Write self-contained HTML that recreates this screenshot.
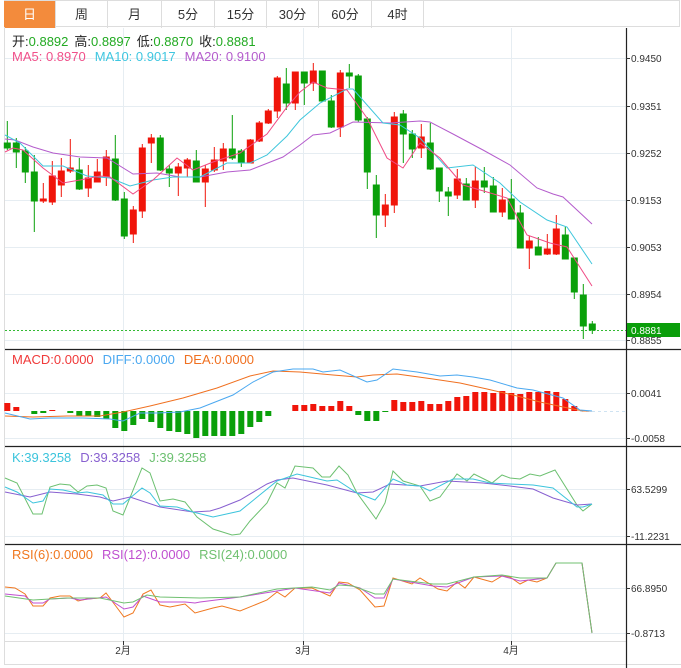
<!DOCTYPE html>
<html><head><meta charset="utf-8"><style>
html,body{margin:0;padding:0;background:#fff;width:681px;height:668px;overflow:hidden;font-family:"Liberation Sans","Noto Sans CJK SC",sans-serif}
.tabs{position:absolute;left:4px;top:0;width:676px;height:27px;border:1px solid #ddd;border-left:none;box-sizing:border-box}
.tab{position:absolute;top:0;height:27px;line-height:27px;text-align:center;font-size:13px;color:#333;border-right:1px solid #ddd;box-sizing:border-box}
.tab.on{background:#f38b3c;color:#fff}
svg{position:absolute;left:0;top:0}
</style></head><body>
<div class="tabs">
<div class="tab on" style="left:0;width:52px">日</div>
<div class="tab" style="left:52px;width:52px">周</div>
<div class="tab" style="left:104px;width:54px">月</div>
<div class="tab" style="left:158px;width:53px">5分</div>
<div class="tab" style="left:211px;width:52px">15分</div>
<div class="tab" style="left:263px;width:52px">30分</div>
<div class="tab" style="left:315px;width:53px">60分</div>
<div class="tab" style="left:368px;width:52px">4时</div>
</div>
<svg width="681" height="668" viewBox="0 0 681 668" style="top:0">
<g stroke="#e6edf2" stroke-width="1" fill="none">
<line x1="5" y1="58.5" x2="626" y2="58.5"/><line x1="5" y1="106.5" x2="626" y2="106.5"/><line x1="5" y1="153.5" x2="626" y2="153.5"/><line x1="5" y1="200.5" x2="626" y2="200.5"/><line x1="5" y1="247.5" x2="626" y2="247.5"/><line x1="5" y1="294.5" x2="626" y2="294.5"/><line x1="5" y1="340.5" x2="626" y2="340.5"/>
<line x1="5" y1="393.5" x2="626" y2="393.5"/><line x1="5" y1="438.5" x2="626" y2="438.5"/>
<line x1="5" y1="489.5" x2="626" y2="489.5"/><line x1="5" y1="536.5" x2="626" y2="536.5"/>
<line x1="5" y1="588.5" x2="626" y2="588.5"/><line x1="5" y1="633.5" x2="626" y2="633.5"/>
<line x1="123.5" y1="28" x2="123.5" y2="641"/><line x1="303.5" y1="28" x2="303.5" y2="641"/><line x1="511.5" y1="28" x2="511.5" y2="641"/>
</g>
<g stroke="#ddd" fill="none"><line x1="4.5" y1="27" x2="4.5" y2="664"/><line x1="4" y1="664.5" x2="681" y2="664.5"/><line x1="5" y1="641.5" x2="626" y2="641.5"/></g>
<g stroke="#222" stroke-width="1.2"><line x1="5" y1="349.5" x2="681" y2="349.5"/><line x1="5" y1="446.5" x2="681" y2="446.5"/><line x1="5" y1="544.5" x2="681" y2="544.5"/><line x1="626.5" y1="28" x2="626.5" y2="668"/></g>
<g stroke="#333"><line x1="626" y1="58.5" x2="630" y2="58.5"/><line x1="626" y1="106.5" x2="630" y2="106.5"/><line x1="626" y1="153.5" x2="630" y2="153.5"/><line x1="626" y1="200.5" x2="630" y2="200.5"/><line x1="626" y1="247.5" x2="630" y2="247.5"/><line x1="626" y1="294.5" x2="630" y2="294.5"/><line x1="626" y1="340.5" x2="630" y2="340.5"/><line x1="626" y1="393.5" x2="630" y2="393.5"/><line x1="626" y1="438.5" x2="630" y2="438.5"/><line x1="626" y1="489.5" x2="630" y2="489.5"/><line x1="626" y1="536.5" x2="630" y2="536.5"/><line x1="626" y1="588.5" x2="630" y2="588.5"/><line x1="626" y1="633.5" x2="630" y2="633.5"/><line x1="123.5" y1="641" x2="123.5" y2="645"/><line x1="303.5" y1="641" x2="303.5" y2="645"/><line x1="511.5" y1="641" x2="511.5" y2="645"/></g>
<g font-size="10" fill="#333" font-family="Liberation Sans,sans-serif">
<text x="631" y="62">0.9450</text><text x="631" y="110">0.9351</text><text x="631" y="157">0.9252</text><text x="631" y="204">0.9153</text><text x="631" y="251">0.9053</text><text x="631" y="298">0.8954</text><text x="631" y="344">0.8855</text>
<text x="631" y="397">0.0041</text><text x="631" y="442">-0.0058</text>
<text x="631" y="493">63.5299</text><text x="631" y="540">-11.2231</text>
<text x="631" y="592">66.8950</text><text x="631" y="637">-0.8713</text>
</g>
<g font-size="10" fill="#333" font-family="Liberation Sans,Noto Sans CJK SC,sans-serif" text-anchor="middle"><text x="123" y="654">2月</text><text x="303" y="654">3月</text><text x="511" y="654">4月</text></g>
<line x1="5" y1="330.5" x2="626" y2="330.5" stroke="#33bb33" stroke-dasharray="2,2"/>
<rect x="627" y="323" width="53" height="14" fill="#0a9e0a"/>
<text x="631" y="334" font-size="10" fill="#fff" font-family="Liberation Sans,sans-serif">0.8881</text>
<g stroke-width="1">
<g stroke="#0aa00a" fill="#0aa00a">
<line x1="7.3" y1="121" x2="7.3" y2="150"/><rect x="4.3" y="143" width="6" height="5"/>
<line x1="16.3" y1="138" x2="16.3" y2="168"/><rect x="13.3" y="143" width="6" height="9"/>
<line x1="25.3" y1="147" x2="25.3" y2="183"/><rect x="22.3" y="151" width="6" height="21"/>
<line x1="34.3" y1="155" x2="34.3" y2="232"/><rect x="31.3" y="172" width="6" height="29"/>
<line x1="79.3" y1="158" x2="79.3" y2="190"/><rect x="76.3" y="170" width="6" height="19"/>
<line x1="115.3" y1="135" x2="115.3" y2="201"/><rect x="112.3" y="159" width="6" height="41"/>
<line x1="124.3" y1="192" x2="124.3" y2="239"/><rect x="121.3" y="199" width="6" height="37"/>
<line x1="160.3" y1="135" x2="160.3" y2="171"/><rect x="157.3" y="138" width="6" height="32"/>
<line x1="169.3" y1="165" x2="169.3" y2="187"/><rect x="166.3" y="169" width="6" height="4"/>
<line x1="196.3" y1="150" x2="196.3" y2="182"/><rect x="193.3" y="161" width="6" height="21"/>
<line x1="232.3" y1="115" x2="232.3" y2="160"/><rect x="229.3" y="149" width="6" height="9"/>
<line x1="241.3" y1="149" x2="241.3" y2="167"/><rect x="238.3" y="151" width="6" height="12"/>
<line x1="286.3" y1="68" x2="286.3" y2="110"/><rect x="283.3" y="84" width="6" height="19"/>
<line x1="304.3" y1="72" x2="304.3" y2="105"/><rect x="301.3" y="72" width="6" height="11"/>
<line x1="322.3" y1="71" x2="322.3" y2="102"/><rect x="319.3" y="71" width="6" height="30"/>
<line x1="331.3" y1="95" x2="331.3" y2="128"/><rect x="328.3" y="101" width="6" height="26"/>
<line x1="349.3" y1="64" x2="349.3" y2="88"/><rect x="346.3" y="73" width="6" height="3"/>
<line x1="358.3" y1="74" x2="358.3" y2="122"/><rect x="355.3" y="76" width="6" height="44"/>
<line x1="367.3" y1="117" x2="367.3" y2="189"/><rect x="364.3" y="119" width="6" height="53"/>
<line x1="376.3" y1="175" x2="376.3" y2="238"/><rect x="373.3" y="185" width="6" height="30"/>
<line x1="403.3" y1="110" x2="403.3" y2="163"/><rect x="400.3" y="114" width="6" height="20"/>
<line x1="412.3" y1="130" x2="412.3" y2="158"/><rect x="409.3" y="134" width="6" height="15"/>
<line x1="430.3" y1="123" x2="430.3" y2="170"/><rect x="427.3" y="143" width="6" height="26"/>
<line x1="439.3" y1="168" x2="439.3" y2="202"/><rect x="436.3" y="168" width="6" height="23"/>
<line x1="448.3" y1="187" x2="448.3" y2="216"/><rect x="445.3" y="192" width="6" height="4"/>
<line x1="466.3" y1="178" x2="466.3" y2="200"/><rect x="463.3" y="184" width="6" height="16"/>
<line x1="484.3" y1="167" x2="484.3" y2="193"/><rect x="481.3" y="181" width="6" height="6"/>
<line x1="493.3" y1="177" x2="493.3" y2="212"/><rect x="490.3" y="186" width="6" height="26"/>
<line x1="511.3" y1="179" x2="511.3" y2="219"/><rect x="508.3" y="199" width="6" height="20"/>
<line x1="520.3" y1="205" x2="520.3" y2="248"/><rect x="517.3" y="213" width="6" height="35"/>
<line x1="538.3" y1="237" x2="538.3" y2="255"/><rect x="535.3" y="247" width="6" height="8"/>
<line x1="565.3" y1="227" x2="565.3" y2="259"/><rect x="562.3" y="235" width="6" height="24"/>
<line x1="574.3" y1="258" x2="574.3" y2="299"/><rect x="571.3" y="258" width="6" height="34"/>
<line x1="583.3" y1="284" x2="583.3" y2="339"/><rect x="580.3" y="295" width="6" height="31"/>
<line x1="592.3" y1="321" x2="592.3" y2="334"/><rect x="589.3" y="324" width="6" height="6"/>
</g>
<g stroke="#f0150a" fill="#f0150a">
<line x1="43.3" y1="183" x2="43.3" y2="203"/><rect x="40.3" y="199" width="6" height="2"/>
<line x1="52.3" y1="161" x2="52.3" y2="205"/><rect x="49.3" y="176" width="6" height="26"/>
<line x1="61.3" y1="158" x2="61.3" y2="197"/><rect x="58.3" y="171" width="6" height="14"/>
<line x1="70.3" y1="139" x2="70.3" y2="173"/><rect x="67.3" y="168" width="6" height="3"/>
<line x1="88.3" y1="165" x2="88.3" y2="197"/><rect x="85.3" y="178" width="6" height="10"/>
<line x1="97.3" y1="159" x2="97.3" y2="182"/><rect x="94.3" y="172" width="6" height="10"/>
<line x1="106.3" y1="150" x2="106.3" y2="186"/><rect x="103.3" y="157" width="6" height="19"/>
<line x1="133.3" y1="206" x2="133.3" y2="243"/><rect x="130.3" y="210" width="6" height="24"/>
<line x1="142.3" y1="144" x2="142.3" y2="218"/><rect x="139.3" y="148" width="6" height="63"/>
<line x1="151.3" y1="134" x2="151.3" y2="163"/><rect x="148.3" y="138" width="6" height="5"/>
<line x1="178.3" y1="163" x2="178.3" y2="196"/><rect x="175.3" y="167" width="6" height="6"/>
<line x1="187.3" y1="158" x2="187.3" y2="177"/><rect x="184.3" y="160" width="6" height="8"/>
<line x1="205.3" y1="165" x2="205.3" y2="207"/><rect x="202.3" y="169" width="6" height="13"/>
<line x1="214.3" y1="147" x2="214.3" y2="172"/><rect x="211.3" y="160" width="6" height="10"/>
<line x1="223.3" y1="143" x2="223.3" y2="170"/><rect x="220.3" y="149" width="6" height="12"/>
<line x1="250.3" y1="139" x2="250.3" y2="163"/><rect x="247.3" y="140" width="6" height="23"/>
<line x1="259.3" y1="121" x2="259.3" y2="142"/><rect x="256.3" y="123" width="6" height="18"/>
<line x1="268.3" y1="109" x2="268.3" y2="124"/><rect x="265.3" y="111" width="6" height="12"/>
<line x1="277.3" y1="76" x2="277.3" y2="118"/><rect x="274.3" y="78" width="6" height="33"/>
<line x1="295.3" y1="72" x2="295.3" y2="110"/><rect x="292.3" y="72" width="6" height="31"/>
<line x1="313.3" y1="63" x2="313.3" y2="91"/><rect x="310.3" y="71" width="6" height="12"/>
<line x1="340.3" y1="70" x2="340.3" y2="137"/><rect x="337.3" y="73" width="6" height="54"/>
<line x1="385.3" y1="194" x2="385.3" y2="227"/><rect x="382.3" y="205" width="6" height="10"/>
<line x1="394.3" y1="112" x2="394.3" y2="213"/><rect x="391.3" y="117" width="6" height="88"/>
<line x1="421.3" y1="124" x2="421.3" y2="158"/><rect x="418.3" y="137" width="6" height="11"/>
<line x1="457.3" y1="169" x2="457.3" y2="199"/><rect x="454.3" y="179" width="6" height="16"/>
<line x1="475.3" y1="167" x2="475.3" y2="208"/><rect x="472.3" y="181" width="6" height="19"/>
<line x1="502.3" y1="188" x2="502.3" y2="217"/><rect x="499.3" y="200" width="6" height="12"/>
<line x1="529.3" y1="236" x2="529.3" y2="269"/><rect x="526.3" y="241" width="6" height="7"/>
<line x1="547.3" y1="234" x2="547.3" y2="255"/><rect x="544.3" y="249" width="6" height="5"/>
<line x1="556.3" y1="215" x2="556.3" y2="255"/><rect x="553.3" y="229" width="6" height="25"/>
</g>
</g>
<g fill="none" stroke-width="1">
<polyline stroke="#b45ccc" points="5,139 15,140 33,147 53,153 80,157 107,158 133,174 157,173 180,177 200,177 227,172 250,170 283,157 300,145 313,135 330,133 353,122 390,123 420,121 430,122 453,134 483,150 510,165 537,188 553,194 563,197 592,224"/>
<polyline stroke="#3ec6dc" points="5,135 20,143 43,166 63,166 87,176 110,178 130,186 153,180 173,177 200,177 227,163 250,163 267,155 287,136 300,120 320,103 347,89 353,89 383,123 400,125 420,138 447,168 473,165 500,183 520,202 547,220 567,227 592,264"/>
<polyline stroke="#f04a84" points="5,152 13,148 23,150 43,168 63,183 80,180 100,176 110,177 133,194 153,180 177,158 193,170 213,162 240,153 267,134 287,107 300,92 313,82 327,88 347,90 367,118 387,158 403,168 420,143 440,158 463,185 487,192 507,198 527,235 550,243 567,247 592,286"/>
</g>
<g fill="#f0150a">
<rect x="4.3" y="403" width="6" height="8"/><rect x="13.3" y="407" width="6" height="4"/><rect x="49.3" y="410" width="6" height="1"/>
<rect x="292.3" y="405" width="6" height="6"/><rect x="301.3" y="405" width="6" height="6"/><rect x="310.3" y="404" width="6" height="7"/><rect x="319.3" y="406" width="6" height="5"/><rect x="328.3" y="406" width="6" height="5"/><rect x="337.3" y="401" width="6" height="10"/><rect x="346.3" y="406" width="6" height="5"/>
<rect x="391.3" y="400" width="6" height="11"/><rect x="400.3" y="402" width="6" height="9"/><rect x="409.3" y="402" width="6" height="9"/><rect x="418.3" y="401" width="6" height="10"/><rect x="427.3" y="404" width="6" height="7"/><rect x="436.3" y="404" width="6" height="7"/><rect x="445.3" y="401" width="6" height="10"/><rect x="454.3" y="397" width="6" height="14"/><rect x="463.3" y="396" width="6" height="15"/><rect x="472.3" y="392" width="6" height="19"/><rect x="481.3" y="392" width="6" height="19"/><rect x="490.3" y="393" width="6" height="18"/><rect x="499.3" y="391" width="6" height="20"/><rect x="508.3" y="393" width="6" height="18"/><rect x="517.3" y="394" width="6" height="17"/><rect x="526.3" y="392" width="6" height="19"/><rect x="535.3" y="392" width="6" height="19"/><rect x="544.3" y="391" width="6" height="20"/><rect x="553.3" y="392" width="6" height="19"/><rect x="562.3" y="399" width="6" height="12"/><rect x="571.3" y="406" width="6" height="5"/>
</g>
<g fill="#0aa00a">
<rect x="31.3" y="411" width="6" height="3"/><rect x="40.3" y="411" width="6" height="2"/><rect x="67.3" y="411" width="6" height="2"/><rect x="76.3" y="411" width="6" height="5"/><rect x="85.3" y="411" width="6" height="5"/><rect x="94.3" y="411" width="6" height="6"/><rect x="103.3" y="411" width="6" height="8"/><rect x="112.3" y="411" width="6" height="17"/><rect x="121.3" y="411" width="6" height="20"/><rect x="130.3" y="411" width="6" height="14"/><rect x="139.3" y="411" width="6" height="8"/><rect x="148.3" y="411" width="6" height="11"/><rect x="157.3" y="411" width="6" height="17"/><rect x="166.3" y="411" width="6" height="20"/><rect x="175.3" y="411" width="6" height="21"/><rect x="184.3" y="411" width="6" height="23"/><rect x="193.3" y="411" width="6" height="27"/><rect x="202.3" y="411" width="6" height="25"/><rect x="211.3" y="411" width="6" height="25"/><rect x="220.3" y="411" width="6" height="25"/><rect x="229.3" y="411" width="6" height="25"/><rect x="238.3" y="411" width="6" height="23"/><rect x="247.3" y="411" width="6" height="16"/><rect x="256.3" y="411" width="6" height="11"/><rect x="265.3" y="411" width="6" height="5"/>
<rect x="355.3" y="411" width="6" height="4"/><rect x="364.3" y="411" width="6" height="10"/><rect x="373.3" y="411" width="6" height="10"/><rect x="382.3" y="411" width="6" height="1"/>
</g>
<line x1="580" y1="411.5" x2="626" y2="411.5" stroke="#cfe3f2" stroke-dasharray="3,3"/>
<g fill="none" stroke-width="1">
<polyline stroke="#f07020" points="5,416 33,417 67,416 100,416 123,412 150,406 183,398 217,388 250,376 273,371 300,372 333,375 357,377 373,375 397,374 433,379 460,383 487,389 513,395 540,402 563,407 583,411 592,411"/>
<polyline stroke="#4aa8f0" points="5,413 30,419 50,418 83,418 110,419 123,421 140,413 157,413 180,412 200,408 233,395 253,382 273,372 293,369 313,369 323,372 340,370 367,382 377,380 393,369 417,372 440,376 457,375 473,377 490,380 517,388 533,390 563,398 580,410 592,411"/>
</g>
<g fill="none" stroke-width="1">
<polyline stroke="#6cc070" points="5,478 17,483 33,514 42,514 50,487 60,484 70,485 78,492 87,486 97,485 106,488 113,511 123,515 142,468 150,473 160,501 173,499 185,502 197,517 213,529 232,535 240,534 250,521 267,503 277,483 285,488 295,466 313,468 322,477 330,477 339,466 348,475 357,493 376,519 385,503 393,471 403,481 420,486 430,501 440,497 457,474 467,481 474,474 492,483 502,475 510,478 520,479 530,474 540,476 555,470 577,505 583,511 592,504"/>
<polyline stroke="#8860d0" points="5,492 30,497 50,492 77,494 100,497 113,501 130,497 160,507 193,512 210,511 220,508 240,500 267,484 277,480 293,478 327,485 357,493 373,492 390,484 420,486 447,481 483,483 510,486 533,489 553,498 577,505 592,504"/>
<polyline stroke="#3cc4dc" points="5,487 17,492 33,503 43,501 50,489 63,490 77,493 87,492 103,495 113,504 123,504 142,488 150,493 160,506 177,507 193,512 213,517 240,511 277,481 297,474 310,477 327,481 337,480 357,493 375,500 393,479 407,485 420,486 430,491 453,479 473,479 490,483 510,484 533,485 553,488 577,507 583,507 592,504"/>
</g>
<g fill="none" stroke-width="1">
<polyline stroke="#f07820" points="5,587 15,588 25,594 33,606 43,606 50,598 60,596 70,596 78,601 87,599 100,598 106,593 115,605 124,617 133,613 143,594 151,590 160,605 170,607 185,604 195,613 213,608 222,606 240,611 267,600 277,592 285,597 295,588 312,588 330,596 339,582 348,583 360,590 375,607 384,606 393,578 412,584 420,578 438,589 447,591 457,582 465,588 474,577 492,582 502,576 510,577 520,584 528,580 537,582 547,578 556,563 582,563 592,633"/>
<polyline stroke="#c050d0" points="5,594 25,596 33,603 43,603 50,599 70,598 80,600 106,597 124,609 133,607 143,596 160,602 185,602 195,603 200,602 240,597 277,591 295,588 330,593 339,583 360,588 375,598 384,598 393,579 433,586 447,587 474,577 502,576 520,581 547,578 556,563 582,563 592,633"/>
<polyline stroke="#70c070" points="5,596 33,600 67,598 100,598 124,603 133,602 147,595 160,597 200,598 240,597 277,589 312,587 330,590 339,585 353,586 375,594 384,594 393,579 433,584 447,584 474,577 502,575 520,578 547,578 556,563 582,563 592,633"/>
</g>
<g font-size="13" font-family="Liberation Sans,Noto Sans CJK SC,sans-serif">
<text x="12" y="46"><tspan fill="#222">开:</tspan><tspan fill="#22aa22">0.8892</tspan><tspan fill="#222" dx="6">高:</tspan><tspan fill="#22aa22">0.8897</tspan><tspan fill="#222" dx="6">低:</tspan><tspan fill="#22aa22">0.8870</tspan><tspan fill="#222" dx="6">收:</tspan><tspan fill="#22aa22">0.8881</tspan></text>
<text x="12" y="61"><tspan fill="#f0508a">MA5: 0.8970</tspan><tspan fill="#3fc6e0" dx="9">MA10: 0.9017</tspan><tspan fill="#b45ccc" dx="9">MA20: 0.9100</tspan></text>
<text x="12" y="364"><tspan fill="#f03a3a">MACD:0.0000</tspan><tspan fill="#4aa8f0" dx="9">DIFF:0.0000</tspan><tspan fill="#f07020" dx="9">DEA:0.0000</tspan></text>
<text x="12" y="462"><tspan fill="#3cc4dc">K:39.3258</tspan><tspan fill="#8860d0" dx="9">D:39.3258</tspan><tspan fill="#6cc070" dx="9">J:39.3258</tspan></text>
<text x="12" y="559"><tspan fill="#f07820">RSI(6):0.0000</tspan><tspan fill="#c050d0" dx="9">RSI(12):0.0000</tspan><tspan fill="#70c070" dx="9">RSI(24):0.0000</tspan></text>
</g>
</svg>
</body></html>
